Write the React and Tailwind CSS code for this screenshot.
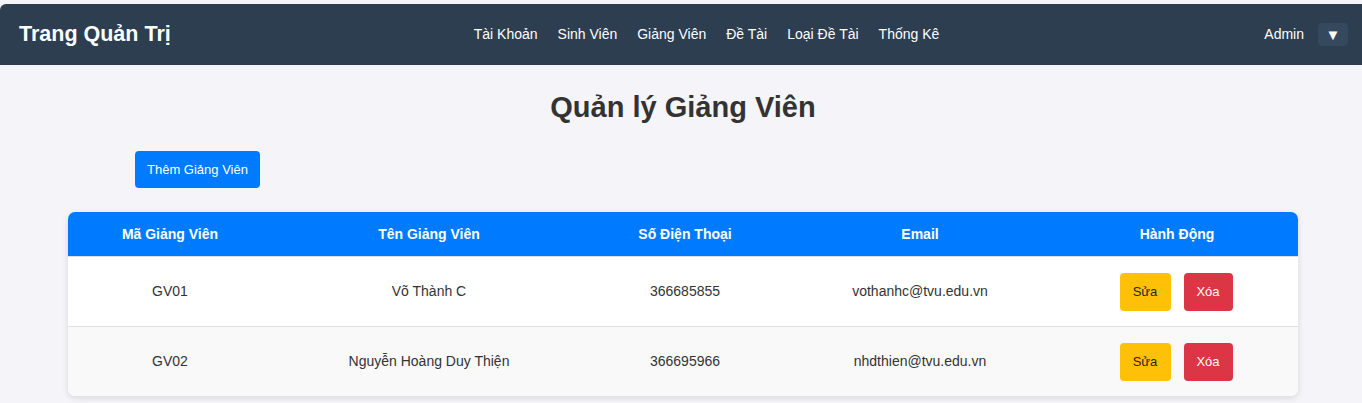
import React from "react";

const rows = [
  { id: "GV01", name: "Võ Thành C", phone: "366685855", email: "vothanhc@tvu.edu.vn" },
  { id: "GV02", name: "Nguyễn Hoàng Duy Thiện", phone: "366695966", email: "nhdthien@tvu.edu.vn" },
];

const cols = ["w-[204px]", "w-[314px]", "w-[198px]", "w-[272px]", "w-[242px]"];

export default function App() {
  return (
    <div className="min-h-[403px] bg-[#f4f4f9] pt-[4px] text-[#333]" style={{ fontFamily: '"Liberation Sans", Arial, sans-serif' }}>
      <nav className="h-[61px] bg-[#2c3e50] rounded-tl-[6px] flex items-center justify-between pl-[19px] pr-[14px]">
        <div className="text-white font-bold text-[21.5px] leading-none">Trang Quản Trị</div>
        <div className="flex items-center gap-[20px] text-white text-[14px] ml-[-22px]">
          <span>Tài Khoản</span>
          <span>Sinh Viên</span>
          <span>Giảng Viên</span>
          <span>Đề Tài</span>
          <span>Loại Đề Tài</span>
          <span>Thống Kê</span>
        </div>
        <div className="flex items-center">
          <span className="text-white text-[14px]">Admin</span>
          <button className="ml-[14px] w-[30px] h-[23px] bg-[#34495e] rounded-[4px] text-white text-[15px] leading-none flex items-center justify-center">▼</button>
        </div>
      </nav>
      <h1 className="text-center font-bold text-[29px] leading-none text-[#333] mt-[28px] ml-[4px]">Quản lý Giảng Viên</h1>
      <div className="mt-[29px] ml-[135px]">
        <button className="h-[37px] w-[125px] bg-[#007bff] text-white text-[13px] rounded-[4px]">Thêm Giảng Viên</button>
      </div>
      <div className="mt-[24px] ml-[68px] w-[1230px] rounded-[7px] overflow-hidden bg-white shadow-[0_2px_6px_rgba(0,0,0,0.12)]">
        <div className="flex h-[44px] bg-[#007bff] text-white font-bold text-[14px] items-center">
          {["Mã Giảng Viên", "Tên Giảng Viên", "Số Điện Thoại", "Email", "Hành Động"].map((h, i) => (
            <div key={h} className={`${cols[i]} text-center`}>{h}</div>
          ))}
        </div>
        {rows.map((r, idx) => (
          <div key={r.id} className={`flex h-[70px] items-center text-[14px] text-[#333] border-t border-[#ddd] ${idx === 1 ? "bg-[#f9f9f9]" : "bg-white"}`}>
            <div className={`${cols[0]} text-center`}>{r.id}</div>
            <div className={`${cols[1]} text-center`}>{r.name}</div>
            <div className={`${cols[2]} text-center`}>{r.phone}</div>
            <div className={`${cols[3]} text-center`}>{r.email}</div>
            <div className={`${cols[4]} flex justify-center gap-[13px] pr-[2px]`}>
              <button className="h-[38px] w-[51px] bg-[#ffc107] text-[#212529] text-[13px] rounded-[4px]">Sửa</button>
              <button className="h-[38px] w-[49px] bg-[#dc3545] text-white text-[13px] rounded-[4px]">Xóa</button>
            </div>
          </div>
        ))}
      </div>
    </div>
  );
}
